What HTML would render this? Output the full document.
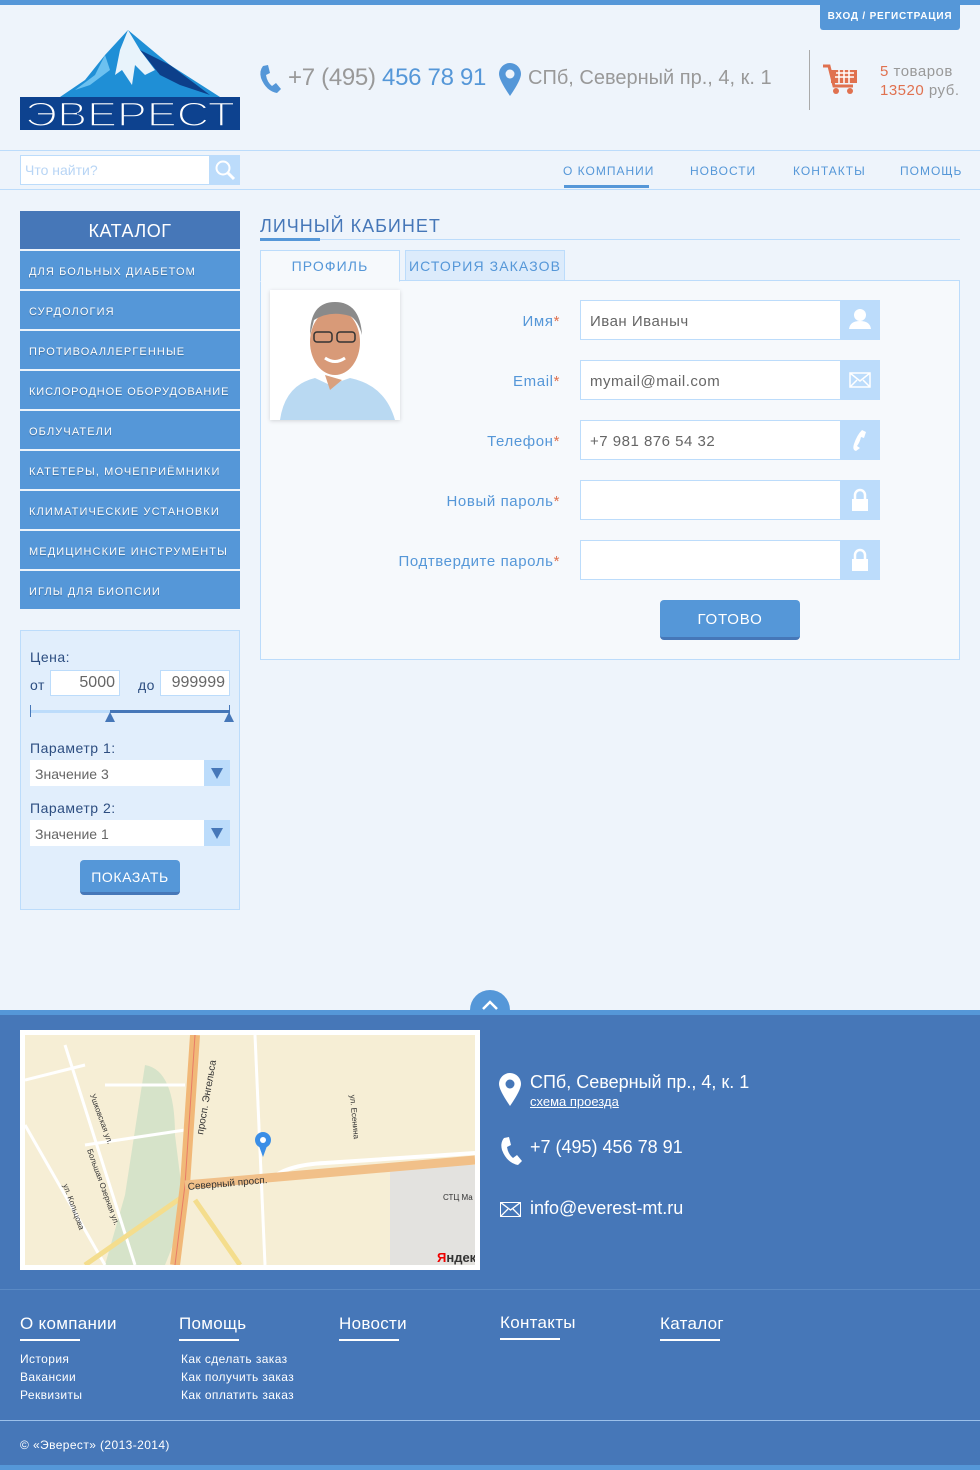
<!DOCTYPE html>
<html><head><meta charset="utf-8"><style>
*{margin:0;padding:0;box-sizing:border-box}
body{width:980px;height:1470px;background:#eef4fb;font-family:"Liberation Sans",sans-serif;position:relative;overflow:hidden}
.a{position:absolute}
.topbar{left:0;top:0;width:980px;height:5px;background:#5597d8}
.login{left:820px;top:5px;width:140px;height:25px;background:#5597d8;border-radius:0 0 3px 3px;color:#fff;font-size:10px;font-weight:bold;letter-spacing:.8px;text-align:center;line-height:24px}
.phone{left:288px;top:64px;font-size:24px;color:#999;letter-spacing:-.3px}
.phone b{font-weight:normal;color:#5597d8}
.addr{left:528px;top:67px;font-size:20px;color:#999}
.vsep{left:809px;top:50px;width:1px;height:60px;background:#aaa}
.cart{left:880px;top:62px;font-size:15px;color:#999;line-height:19px;letter-spacing:.5px}
.cart span{color:#e0714f}
.navbar{left:0;top:150px;width:980px;height:40px;border-top:1px solid #bcdcfb;border-bottom:1px solid #bcdcfb}
.search{left:20px;top:155px;width:190px;height:30px;background:#fff;border:1px solid #bcdcfb;color:#b8d5f5;font-size:14px;padding:6px 4px}
.sbtn{left:210px;top:155px;width:30px;height:30px;background:#bcdcfb}
.nav{top:164px;font-size:12px;color:#5597d8;letter-spacing:1px}
.cat{left:20px;width:220px;background:#5597d8;color:#fff;font-size:11px;letter-spacing:1.1px;padding-left:9px;height:38px;line-height:42px;text-shadow:0 1px 1px rgba(0,0,0,.3)}
.filter{left:20px;top:630px;width:220px;height:280px;background:#e1eefc;border:1px solid #bcdcfb}
.lbl{font-size:14px;color:#2c4d80;letter-spacing:.5px}
.inp{background:#fff;border:1px solid #bcdcfb;font-size:16px;color:#666;text-align:right;padding:3px 4px;height:26px}
.sel{left:30px;width:200px;height:26px;background:#fff;font-size:14px;color:#666;padding:6px 5px 2px}
.sel i{position:absolute;right:0;top:0;width:26px;height:26px;background:#bcdcfb}
.sel i:after{content:"";position:absolute;left:7px;top:8px;border-left:6px solid transparent;border-right:6px solid transparent;border-top:11px solid #4677b8}
.btn{background:#5597d8;color:#fff;text-align:center;border-radius:4px;border-bottom:3px solid #4677b8}
.h1{left:260px;top:216px;font-size:18px;color:#4677b8;letter-spacing:1px}
.panel{left:260px;top:280px;width:700px;height:380px;background:#f6f9fc;border:1px solid #bcdcfb}
.tab{top:250px;height:31px;font-size:14px;color:#5597d8;letter-spacing:1.1px;text-align:center;line-height:31px;border:1px solid #bcdcfb}
.flbl{width:300px;left:260px;text-align:right;font-size:15px;color:#5597d8;letter-spacing:.6px}
.flbl span{color:#e0714f}
.fin{left:580px;width:300px;height:40px;background:#fff;border:1px solid #bcdcfb;font-size:15px;color:#666;padding:12px 9px 0;letter-spacing:.5px}
.fin i{position:absolute;right:-1px;top:-1px;width:40px;height:40px;background:#bcdcfb}
.foot{left:0;top:1015px;width:980px;height:450px;background:#4677b8}
.fh{top:1314px;font-size:17px;color:#fff;letter-spacing:.3px}
.fh:after{content:"";display:block;width:60px;height:2px;background:#fff;margin-top:5px}
.fl{font-size:12px;color:#fff;line-height:18px;letter-spacing:.4px}
</style></head><body>
<div class="a topbar"></div>
<div class="a login">ВХОД / РЕГИСТРАЦИЯ</div>
<svg class="a" style="left:20px;top:30px" width="220" height="100" viewBox="0 0 220 100">
<polygon points="108,0 150,35 200,67 40,67 65,50 85,25" fill="#1f8fd6"/>
<polygon points="108,0 120,20 135,40 125,45 115,35 112,55 102,40 95,45 100,20" fill="#e8f3fb"/>
<polygon points="120,20 150,35 190,65 160,55 140,45" fill="#0d3f8a"/>
<polygon points="85,25 75,45 55,60 70,55 90,40" fill="#6cc1f0"/>
<rect x="0" y="67" width="220" height="33" fill="#0d428f"/>
<text x="110" y="96" text-anchor="middle" font-family="Liberation Sans" font-size="34" fill="#fff" textLength="210" lengthAdjust="spacingAndGlyphs" stroke="#0d428f" stroke-width="1.5">ЭВЕРЕСТ</text>
</svg>
<svg class="a" style="left:258px;top:64px" width="24" height="30" viewBox="0 0 24 30"><path d="M5 2 L10 1 L12 9 L8 11 Q9 18 14 22 L18 19 L23 25 L19 29 Q8 27 3 14 Q1 7 5 2Z" fill="#5597d8"/></svg>
<div class="a phone">+7 (495) <b>456 78 91</b></div>
<svg class="a" style="left:499px;top:63px" width="22" height="33" viewBox="0 0 22 33"><path d="M11 0 A11 11 0 0 1 22 11 Q22 17 11 33 Q0 17 0 11 A11 11 0 0 1 11 0Z" fill="#5597d8"/><circle cx="11" cy="11" r="4.5" fill="#eef4fb"/></svg>
<div class="a addr">СПб, Северный пр., 4, к. 1</div>
<div class="a vsep"></div>
<svg class="a" style="left:822px;top:64px" width="36" height="32" viewBox="0 0 36 32"><path d="M1 2 H7 L12 22 H31" stroke="#e0714f" stroke-width="3" fill="none"/><rect x="9" y="6" width="26" height="13" fill="#e0714f"/><path d="M14 9 H32 M13 13 H32 M17 6 V19 M22 6 V19 M27 6 V19" stroke="#fff" stroke-width="1.5"/><circle cx="14" cy="27" r="3" fill="#e0714f"/><circle cx="28" cy="27" r="3" fill="#e0714f"/></svg>
<div class="a cart"><span>5</span> товаров<br><span>13520</span> руб.</div>
<div class="a navbar"></div>
<div class="a search">Что найти?</div>
<div class="a sbtn"><svg width="30" height="30"><circle cx="13" cy="13" r="6.5" stroke="#fff" stroke-width="2" fill="none"/><path d="M18 18 L24 24" stroke="#fff" stroke-width="3"/></svg></div>
<div class="a nav" style="left:563px">О КОМПАНИИ</div>
<div class="a" style="left:564px;top:185px;width:85px;height:3px;background:#5597d8"></div>
<div class="a nav" style="left:690px">НОВОСТИ</div>
<div class="a nav" style="left:793px">КОНТАКТЫ</div>
<div class="a nav" style="left:900px">ПОМОЩЬ</div>

<div class="a" style="left:20px;top:211px;width:220px;height:38px;background:#4677b8;color:#fff;font-size:18px;text-align:center;line-height:40px;letter-spacing:.5px">КАТАЛОГ</div>
<div class="a cat" style="top:251px">ДЛЯ БОЛЬНЫХ ДИАБЕТОМ</div>
<div class="a cat" style="top:291px">СУРДОЛОГИЯ</div>
<div class="a cat" style="top:331px">ПРОТИВОАЛЛЕРГЕННЫЕ</div>
<div class="a cat" style="top:371px;letter-spacing:.9px">КИСЛОРОДНОЕ ОБОРУДОВАНИЕ</div>
<div class="a cat" style="top:411px">ОБЛУЧАТЕЛИ</div>
<div class="a cat" style="top:451px">КАТЕТЕРЫ, МОЧЕПРИЁМНИКИ</div>
<div class="a cat" style="top:491px">КЛИМАТИЧЕСКИЕ УСТАНОВКИ</div>
<div class="a cat" style="top:531px">МЕДИЦИНСКИЕ ИНСТРУМЕНТЫ</div>
<div class="a cat" style="top:571px">ИГЛЫ ДЛЯ БИОПСИИ</div>

<div class="a filter"></div>
<div class="a lbl" style="left:30px;top:649px">Цена:</div>
<div class="a lbl" style="left:30px;top:677px">от</div>
<div class="a inp" style="left:50px;top:670px;width:70px">5000</div>
<div class="a lbl" style="left:138px;top:677px">до</div>
<div class="a inp" style="left:160px;top:670px;width:70px">999999</div>
<div class="a" style="left:30px;top:710px;width:200px;height:3px;background:#bcdcfb"></div>
<div class="a" style="left:30px;top:705px;width:1px;height:12px;background:#4677b8"></div>
<div class="a" style="left:110px;top:710px;width:119px;height:3px;background:#4677b8"></div>
<div class="a" style="left:229px;top:705px;width:1px;height:12px;background:#4677b8"></div>
<div class="a" style="left:105px;top:712px;border-left:5px solid transparent;border-right:5px solid transparent;border-bottom:10px solid #4677b8"></div>
<div class="a" style="left:224px;top:712px;border-left:5px solid transparent;border-right:5px solid transparent;border-bottom:10px solid #4677b8"></div>
<div class="a lbl" style="left:30px;top:740px">Параметр 1:</div>
<div class="a sel" style="top:760px">Значение 3<i></i></div>
<div class="a lbl" style="left:30px;top:800px">Параметр 2:</div>
<div class="a sel" style="top:820px">Значение 1<i></i></div>
<div class="a btn" style="left:80px;top:860px;width:100px;height:35px;font-size:14px;line-height:34px;letter-spacing:.6px">ПОКАЗАТЬ</div>

<div class="a h1">ЛИЧНЫЙ КАБИНЕТ</div>
<div class="a" style="left:260px;top:239px;width:700px;height:1px;background:#bcdcfb"></div>
<div class="a" style="left:260px;top:238px;width:60px;height:3px;background:#5597d8"></div>
<div class="a panel"></div>
<div class="a tab" style="left:260px;width:140px;background:#f6f9fc;border-bottom-color:#f6f9fc;height:32px">ПРОФИЛЬ</div>
<div class="a tab" style="left:405px;width:160px;background:#dcebfb">ИСТОРИЯ ЗАКАЗОВ</div>
<div class="a" style="left:270px;top:290px;width:130px;height:130px;background:#fff;box-shadow:0 1px 4px rgba(0,0,0,.15)">
<svg width="130" height="130" viewBox="0 0 130 130"><path d="M10 130 Q15 95 45 88 L60 95 L80 88 Q115 95 125 130Z" fill="#b9d9f2"/><path d="M55 85 L60 100 L72 90 Z" fill="#d9a07e"/><ellipse cx="65" cy="52" rx="25" ry="33" fill="#d89a78"/><path d="M40 45 Q40 12 65 12 Q90 12 92 45 Q88 30 80 26 Q60 20 44 30 Z" fill="#8a8a8a"/><rect x="44" y="42" width="18" height="10" rx="3" fill="none" stroke="#333" stroke-width="1.5"/><rect x="67" y="42" width="18" height="10" rx="3" fill="none" stroke="#333" stroke-width="1.5"/><path d="M55 68 Q65 75 75 68" stroke="#fff" stroke-width="3" fill="none"/></svg></div>

<div class="a flbl" style="top:313px">Имя<span>*</span></div>
<div class="a fin" style="top:300px">Иван Иваныч<i><svg width="40" height="40"><circle cx="20" cy="15" r="6" fill="#fff"/><path d="M9 29 Q10 21 20 21 Q30 21 31 29Z" fill="#fff"/></svg></i></div>
<div class="a flbl" style="top:373px">Email<span>*</span></div>
<div class="a fin" style="top:360px">mymail@mail.com<i><svg width="40" height="40"><rect x="10" y="13" width="20" height="14" fill="none" stroke="#fff" stroke-width="1.5"/><path d="M10 13 L20 21 L30 13 M10 27 L17 20 M30 27 L23 20" stroke="#fff" stroke-width="1.5" fill="none"/></svg></i></div>
<div class="a flbl" style="top:433px">Телефон<span>*</span></div>
<div class="a fin" style="top:420px">+7 981 876 54 32<i><svg width="40" height="40"><path d="M22 10 L26 12 L24 18 L21 17 Q20 22 17 26 L20 28 L16 31 Q12 30 14 24 Q17 15 22 10Z" fill="#fff"/></svg></i></div>
<div class="a flbl" style="top:493px">Новый пароль<span>*</span></div>
<div class="a fin" style="top:480px"><i><svg width="40" height="40"><path d="M15 19 V15 A5 5 0 0 1 25 15 V19" stroke="#fff" stroke-width="2.5" fill="none"/><rect x="12" y="19" width="16" height="12" fill="#fff"/></svg></i></div>
<div class="a flbl" style="top:553px">Подтвердите пароль<span>*</span></div>
<div class="a fin" style="top:540px"><i><svg width="40" height="40"><path d="M15 19 V15 A5 5 0 0 1 25 15 V19" stroke="#fff" stroke-width="2.5" fill="none"/><rect x="12" y="19" width="16" height="12" fill="#fff"/></svg></i></div>
<div class="a btn" style="left:660px;top:600px;width:140px;height:40px;font-size:15px;line-height:40px;letter-spacing:.8px">ГОТОВО</div>

<div class="a" style="left:470px;top:990px;width:40px;height:40px;border-radius:20px;background:#5597d8"><svg width="40" height="25"><path d="M13 19 L20 12 L27 19" stroke="#fff" stroke-width="2.5" fill="none"/></svg></div>
<div class="a" style="left:0;top:1010px;width:980px;height:5px;background:#5597d8"></div>
<div class="a foot"></div>
<div class="a" style="left:20px;top:1030px;width:460px;height:240px;background:#fff;padding:5px">
<svg width="450" height="230" viewBox="0 0 450 230"><rect width="450" height="230" fill="#f6eed5"/>
<path d="M120 30 Q150 35 150 100 L160 180 L140 230 L80 230 L100 160 Z" fill="#d6e3c9"/>
<rect x="365" y="130" width="85" height="100" fill="#e3e2df"/>
<path d="M0 45 L60 30 M0 90 L80 230 M40 10 L110 230 M80 50 L160 50 M60 110 L160 95 M230 0 L240 230" stroke="#fff" stroke-width="3" fill="none"/>
<path d="M245 145 Q260 130 300 128 L450 118" stroke="#fff" stroke-width="4" fill="none"/>
<path d="M60 230 L160 160 M170 165 L215 230" stroke="#f4dd8d" stroke-width="5" fill="none"/>
<path d="M170 0 L160 150 L150 230" stroke="#f1b878" stroke-width="10" fill="none"/>
<path d="M170 0 L160 150 L150 230" stroke="#e87b66" stroke-width="1" fill="none"/>
<path d="M160 150 L450 125" stroke="#f1c089" stroke-width="9" fill="none"/>
<text x="163" y="155" font-size="10" fill="#333" transform="rotate(-5 163 155)">Северный просп.</text>
<text x="178" y="100" font-size="10" fill="#333" transform="rotate(-80 178 100)">просп. Энгельса</text>
<text x="325" y="60" font-size="8" fill="#333" transform="rotate(85 325 60)">ул. Есенина</text>
<text x="65" y="60" font-size="8" fill="#333" transform="rotate(70 65 60)">Ушковская ул.</text>
<text x="62" y="115" font-size="8" fill="#333" transform="rotate(70 62 115)">Большая Озерная ул.</text>
<text x="38" y="150" font-size="8" fill="#333" transform="rotate(70 38 150)">ул. Кольцова</text>
<text x="418" y="165" font-size="8" fill="#333">СТЦ Ма</text>
<text x="412" y="227" font-size="13" fill="#333" font-weight="bold"><tspan fill="#e00">Я</tspan>ндекс</text>
<circle cx="238" cy="105" r="8" fill="#3a8ee6"/><circle cx="238" cy="105" r="3" fill="#fff"/><path d="M234 111 L238 122 L242 111Z" fill="#3a8ee6"/>
</svg></div>
<svg class="a" style="left:499px;top:1073px" width="22" height="33" viewBox="0 0 22 33"><path d="M11 0 A11 11 0 0 1 22 11 Q22 17 11 33 Q0 17 0 11 A11 11 0 0 1 11 0Z" fill="#fff"/><circle cx="11" cy="11" r="4.5" fill="#4677b8"/></svg>
<div class="a" style="left:530px;top:1072px;font-size:18px;color:#fff">СПб, Северный пр., 4, к. 1</div>
<div class="a" style="left:530px;top:1094px;font-size:13px;color:#fff;text-decoration:underline">схема проезда</div>
<svg class="a" style="left:499px;top:1136px" width="24" height="30" viewBox="0 0 24 30"><path d="M5 2 L10 1 L12 9 L8 11 Q9 18 14 22 L18 19 L23 25 L19 29 Q8 27 3 14 Q1 7 5 2Z" fill="#fff"/></svg>
<div class="a" style="left:530px;top:1137px;font-size:18px;color:#fff">+7 (495) 456 78 91</div>
<svg class="a" style="left:500px;top:1202px" width="21" height="15"><rect x="0.5" y="0.5" width="20" height="14" fill="none" stroke="#fff"/><path d="M0 0 L10.5 8 L21 0 M0 15 L8 7 M21 15 L13 7" stroke="#fff" stroke-width="1.3" fill="none"/></svg>
<div class="a" style="left:530px;top:1198px;font-size:18px;color:#fff">info@everest-mt.ru</div>
<div class="a" style="left:0;top:1289px;width:980px;height:1px;background:#5a89c4"></div>
<div class="a fh" style="left:20px">О компании</div>
<div class="a fh" style="left:179px">Помощь</div>
<div class="a fh" style="left:339px">Новости</div>
<div class="a fh" style="left:500px;top:1313px">Контакты</div>
<div class="a fh" style="left:660px">Каталог</div>
<div class="a fl" style="left:20px;top:1350px">История<br>Вакансии<br>Реквизиты</div>
<div class="a fl" style="left:181px;top:1350px">Как сделать заказ<br>Как получить заказ<br>Как оплатить заказ</div>
<div class="a" style="left:0;top:1420px;width:980px;height:1px;background:#9cc0ea"></div>
<div class="a fl" style="left:20px;top:1436px">© «Эверест» (2013-2014)</div>
<div class="a" style="left:0;top:1465px;width:980px;height:5px;background:#5597d8"></div>
</body></html>
